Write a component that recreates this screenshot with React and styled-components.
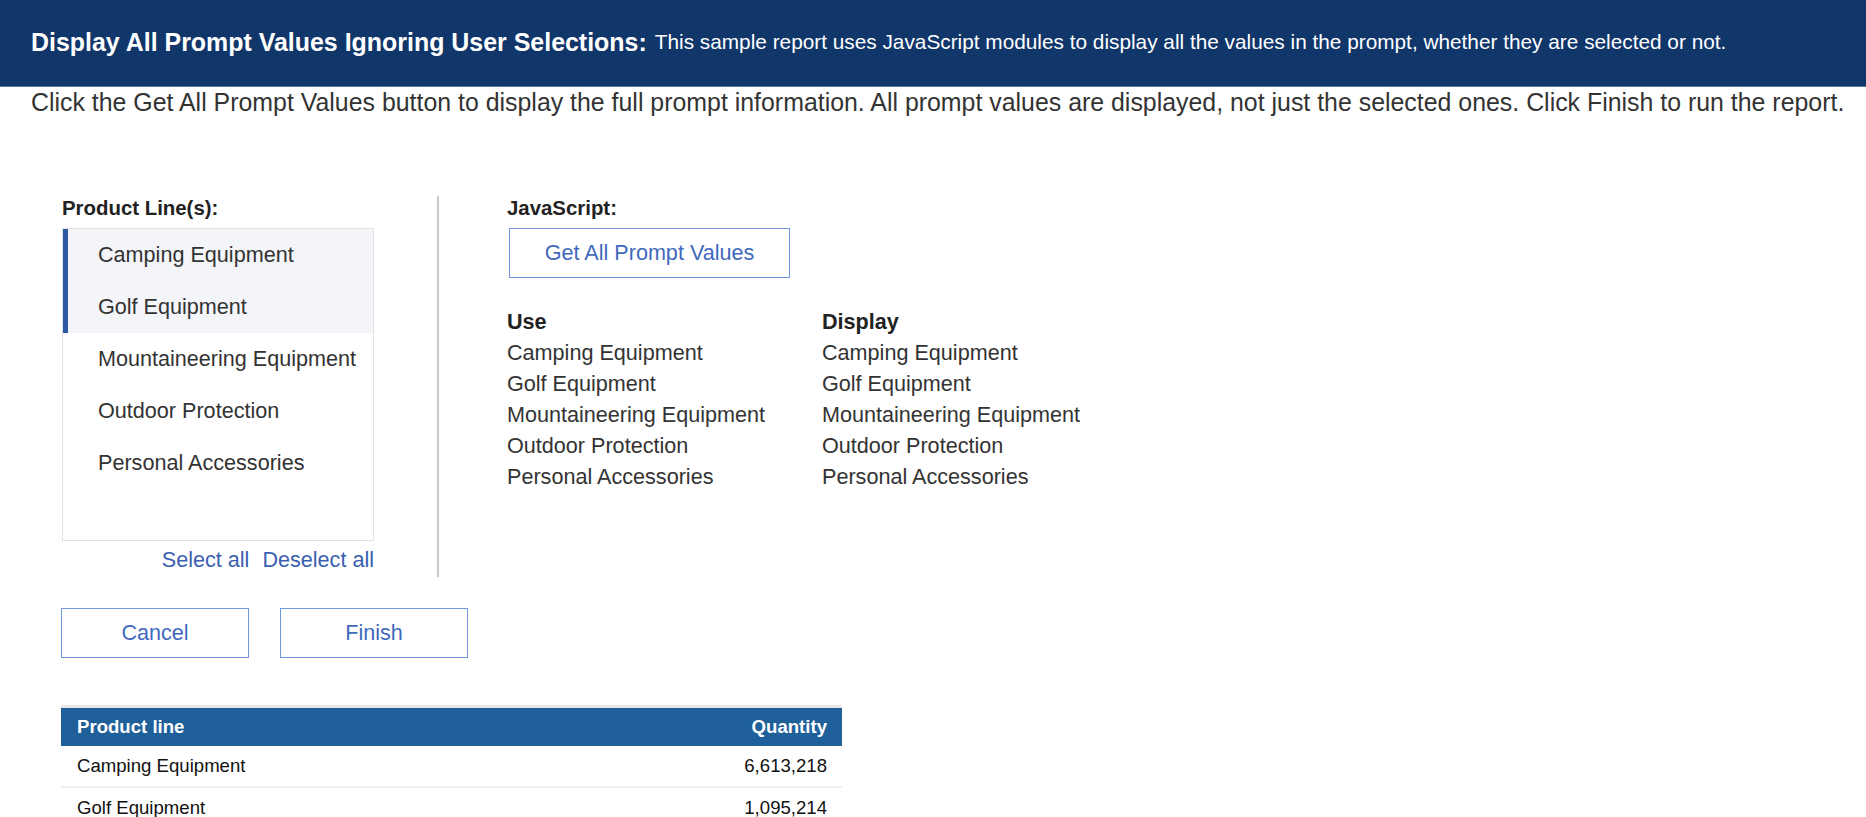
import styled, { createGlobalStyle } from "styled-components";

const GlobalStyle = createGlobalStyle`
    body {
        margin: 0;
        font-family: "Liberation Sans", Arial, sans-serif;
        background: #fff;
        color: #333;
    }
`;

const productLines = [
    "Camping Equipment",
    "Golf Equipment",
    "Mountaineering Equipment",
    "Outdoor Protection",
    "Personal Accessories",
];

const selected = ["Camping Equipment", "Golf Equipment"];

const reportRows = [
    { line: "Camping Equipment", qty: "6,613,218" },
    { line: "Golf Equipment", qty: "1,095,214" },
];

const App = () => {
    return (
        <Page>
            <GlobalStyle />
            <Banner>
                <BannerTitle>Display All Prompt Values Ignoring User Selections:</BannerTitle>
                <BannerText>This sample report uses JavaScript modules to display all the values in the prompt, whether they are selected or not.</BannerText>
            </Banner>
            <Intro>Click the Get All Prompt Values button to display the full prompt information. All prompt values are displayed, not just the selected ones. Click Finish to run the report.</Intro>
            <Content>
                <Columns>
                    <PromptColumn>
                        <Label>Product Line(s):</Label>
                        <ListBox>
                            {productLines.map((p) => (
                                <ListItem key={p} $selected={selected.includes(p)}>{p}</ListItem>
                            ))}
                        </ListBox>
                        <Links>
                            <LinkText>Select all</LinkText>
                            <LinkText>Deselect all</LinkText>
                        </Links>
                    </PromptColumn>
                    <ScriptColumn>
                        <Label>JavaScript:</Label>
                        <OutlineButton $width="281px" $shift="2px">Get All Prompt Values</OutlineButton>
                        <ValuesGrid>
                            <ValueHead>Use</ValueHead>
                            <ValueHead>Display</ValueHead>
                            {productLines.flatMap((p) => [
                                <ValueCell key={"u" + p}>{p}</ValueCell>,
                                <ValueCell key={"d" + p}>{p}</ValueCell>,
                            ])}
                        </ValuesGrid>
                    </ScriptColumn>
                </Columns>
                <ButtonRow>
                    <OutlineButton $width="188px">Cancel</OutlineButton>
                    <OutlineButton $width="188px">Finish</OutlineButton>
                </ButtonRow>
                <Report>
                    <thead>
                        <tr>
                            <HeadCell>Product line</HeadCell>
                            <HeadCell $right>Quantity</HeadCell>
                        </tr>
                    </thead>
                    <tbody>
                        {reportRows.map((r) => (
                            <tr key={r.line}>
                                <Cell>{r.line}</Cell>
                                <Cell $right>{r.qty}</Cell>
                            </tr>
                        ))}
                    </tbody>
                </Report>
            </Content>
        </Page>
    );
};

const Page = styled.div`
    width: 1866px;
    height: 817px;
    overflow: hidden;
`;

const Banner = styled.header`
    height: 87px;
    box-sizing: border-box;
    background: #11366a;
    border-bottom: 1px solid #5d7898;
    display: flex;
    align-items: center;
    padding: 0 0 2px 31px;
    color: #fff;
    white-space: nowrap;
`;

const BannerTitle = styled.span`
    font-weight: bold;
    font-size: 24.95px;
    margin-right: 8px;
`;

const BannerText = styled.span`
    font-size: 20.8px;
`;

// 87px banner + 30px line + 79px gap puts the prompt area at y=196
const Intro = styled.p`
    margin: 0 0 79px;
    padding-left: 31px;
    line-height: 30px;
    font-size: 24.9px;
    color: #333;
    white-space: nowrap;
`;

const Content = styled.main`
    padding-left: 62px;
`;

const Columns = styled.div`
    display: flex;
    align-items: stretch;
`;

const PromptColumn = styled.section`
    width: 312px;
    margin-right: 63px;
    padding-bottom: 4px;
`;

const ScriptColumn = styled.section`
    border-left: 2px solid #c9c9c9;
    padding-left: 68px;
`;

const Label = styled.div`
    font-weight: bold;
    font-size: 20.4px;
    line-height: 24px;
    color: #222;
    margin-bottom: 8px;
`;

const ListBox = styled.div`
    height: 313px;
    box-sizing: border-box;
    border: 1px solid #e2e2e2;
`;

const ListItem = styled.div`
    height: 52px;
    line-height: 52px;
    box-sizing: border-box;
    padding-left: 30px;
    font-size: 21.6px;
    color: #333;
    white-space: nowrap;
    background: ${(p) => (p.$selected ? "#f3f5f9" : "transparent")};
    border-left: 5px solid ${(p) => (p.$selected ? "#2b57a4" : "transparent")};
`;

const Links = styled.div`
    display: flex;
    justify-content: flex-end;
    gap: 13px;
    margin-top: 6px;
    line-height: 26px;
`;

const LinkText = styled.span`
    font-size: 21.6px;
    color: #3a5fb0;
`;

const OutlineButton = styled.button`
    width: ${(p) => p.$width};
    height: 50px;
    margin-left: ${(p) => p.$shift || "0"};
    background: #fff;
    border: 1px solid #7296da;
    color: #4169bd;
    font-family: "Liberation Sans", Arial, sans-serif;
    font-size: 21.6px;
    padding: 0;
`;

const ValuesGrid = styled.div`
    display: grid;
    grid-template-columns: 315px auto;
    margin-top: 28px;
    line-height: 31px;
    font-size: 21.6px;
`;

const ValueHead = styled.div`
    font-weight: bold;
    color: #222;
`;

const ValueCell = styled.div`
    color: #333;
    white-space: nowrap;
`;

const ButtonRow = styled.div`
    display: flex;
    gap: 31px;
    margin-top: 31px;
    margin-left: -1px;
`;

const Report = styled.table`
    margin-top: 47px;
    margin-left: -1px;
    width: 781px;
    border-collapse: collapse;
    border-top: 3px solid #e6e6e6;
    font-size: 18.6px;
`;

const HeadCell = styled.th`
    background: #1f5f9a;
    color: #fff;
    height: 38px;
    padding: 0 15px 0 16px;
    font-weight: bold;
    text-align: ${(p) => (p.$right ? "right" : "left")};
`;

const Cell = styled.td`
    height: 40px;
    padding: 0 15px 0 16px;
    color: #111;
    border-bottom: 2px solid #efefef;
    text-align: ${(p) => (p.$right ? "right" : "left")};
`;

export default App;
